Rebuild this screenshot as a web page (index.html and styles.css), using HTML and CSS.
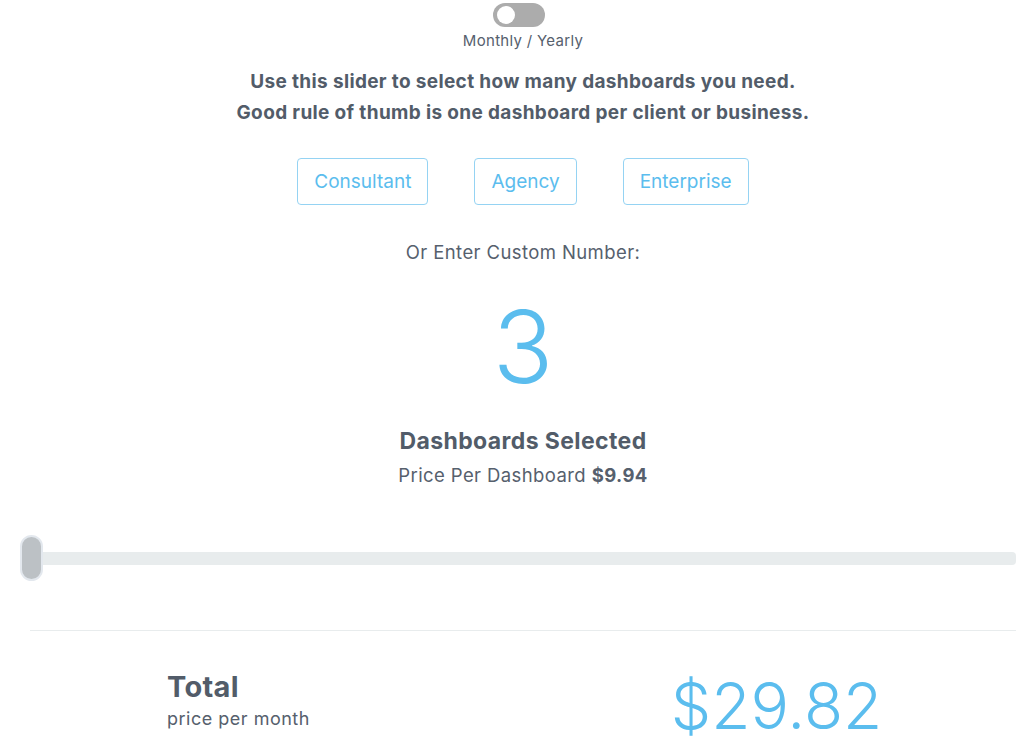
FILE: index.html
```html
<!DOCTYPE html>
<html lang="en">
<head>
    <meta charset="UTF-8">
    <meta name="viewport" content="width=device-width, initial-scale=1.0">
    <title>Pricing</title>
    <link rel="stylesheet" href="styles.css">
</head>
<body>
    <div class="pricing">
        <div class="billing">
            <div class="toggle"><span class="knob"></span></div>
            <div class="billing-label">Monthly / Yearly</div>
        </div>

        <p class="intro">
            Use this slider to select how many dashboards you need.<br>
            Good rule of thumb is one dashboard per client or business.
        </p>

        <div class="presets">
            <button class="preset">Consultant</button>
            <button class="preset">Agency</button>
            <button class="preset">Enterprise</button>
        </div>

        <div class="custom-label">Or Enter Custom Number:</div>
        <div class="count">3</div>

        <div class="selected">Dashboards Selected</div>
        <div class="per-price">Price Per Dashboard <b>$9.94</b></div>

        <div class="slider">
            <div class="track"></div>
            <div class="thumb"></div>
        </div>

        <hr class="divider">

        <div class="total">
            <div class="total-label">
                <div class="total-title">Total</div>
                <div class="total-sub">price per month</div>
            </div>
            <div class="total-price">$29.82</div>
        </div>
    </div>
</body>
</html>
```

FILE: styles.css
```css
:root {
    --text-color: #56606d;
    --heading-color: #525c69;
    --blue: #5bbdee;
    --blue-border: #95d3f3;
    --line-color: #e8eced;
}

* {
    margin: 0;
    padding: 0;
    box-sizing: border-box;
}

body {
    font-family: Inter, "Noto Sans", sans-serif;
    color: var(--text-color);
    background-color: #ffffff;
}

.pricing {
    padding: 3px 8px 0 30px;
    display: flex;
    flex-direction: column;
    align-items: center;
    text-align: center;
}

.billing {
    display: flex;
    flex-direction: column;
    align-items: center;
}

.toggle {
    position: relative;
    width: 52px;
    height: 24px;
    margin-right: 8px;
    border-radius: 12px;
    background-color: #acacac;
}

.knob {
    position: absolute;
    top: 3px;
    left: 4px;
    width: 18px;
    height: 18px;
    border-radius: 50%;
    background-color: #ffffff;
}

.billing-label {
    margin-top: 5px;
    font-size: 15px;
    line-height: 18px;
    letter-spacing: 0.3px;
}

.intro {
    margin-top: 16px;
    font-size: 19px;
    line-height: 31px;
    font-weight: 700;
    letter-spacing: 0.35px;
    color: var(--heading-color);
}

.presets {
    margin-top: 30px;
    display: flex;
    gap: 46px;
}

.preset {
    font-family: inherit;
    font-size: 19px;
    line-height: 23px;
    padding: 11px 16px;
    border: 1px solid var(--blue-border);
    border-radius: 4px;
    background: #ffffff;
    color: var(--blue);
    cursor: pointer;
}

.custom-label {
    margin-top: 36px;
    font-size: 18.5px;
    line-height: 22px;
    letter-spacing: 0.4px;
}

.count {
    margin-top: 34px;
    font-size: 100px;
    line-height: 100px;
    font-weight: 300;
    color: var(--blue);
}

.selected {
    margin-top: 30px;
    font-size: 23px;
    line-height: 28px;
    font-weight: 700;
    letter-spacing: 0.4px;
    color: var(--heading-color);
}

.per-price {
    margin-top: 9px;
    font-size: 18.5px;
    line-height: 22px;
    letter-spacing: 0.4px;
}

.slider {
    position: relative;
    align-self: stretch;
    margin-top: 49px;
    height: 46px;
    display: flex;
    align-items: center;
}

.track {
    flex: 1;
    height: 13px;
    border-radius: 4px;
    background-color: var(--line-color);
}

.thumb {
    position: absolute;
    left: -10px;
    top: 0;
    width: 23px;
    height: 46px;
    border-radius: 12px;
    background-color: #bcc1c5;
    border: 2px solid #e3e8ee;
}

.divider {
    align-self: stretch;
    margin-top: 49px;
    border: none;
    border-top: 1px solid var(--line-color);
}

.total {
    align-self: stretch;
    margin-top: 39px;
    display: grid;
    grid-template-columns: 1fr 1fr;
    align-items: start;
}

.total-label {
    text-align: left;
    padding-left: 137px;
}

.total-title {
    font-size: 29px;
    line-height: 34px;
    font-weight: 700;
    letter-spacing: 0.3px;
    color: var(--heading-color);
}

.total-sub {
    margin-top: 4px;
    font-size: 18px;
    line-height: 22px;
    letter-spacing: 0.5px;
}

.total-price {
    padding-top: 3px;
    padding-left: 14px;
    font-size: 64px;
    line-height: 66px;
    font-weight: 300;
    color: var(--blue);
}
```
